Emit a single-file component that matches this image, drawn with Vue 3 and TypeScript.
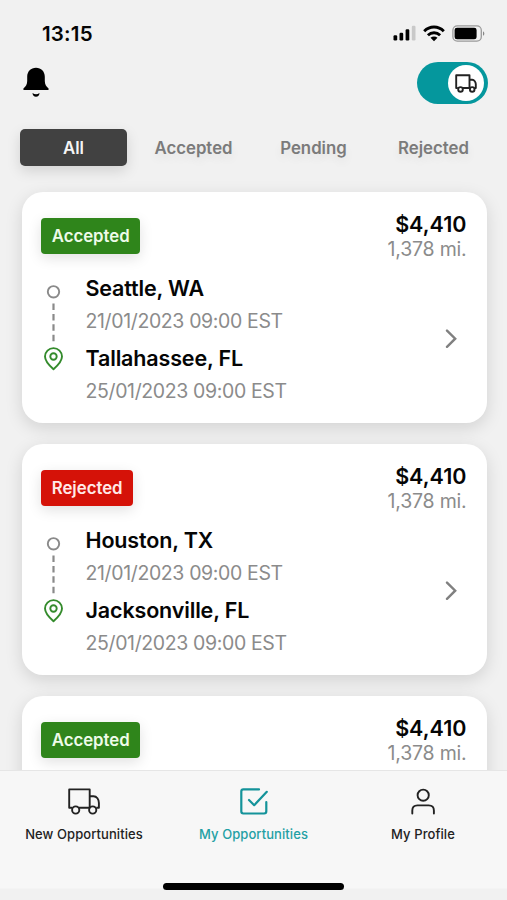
<script setup lang="ts">
import { ref } from 'vue'

type Status = 'Accepted' | 'Rejected'

interface Stop {
  city: string
  date: string
}

interface Load {
  id: number
  status: Status
  price: string
  distance: string
  stops: Stop[]
}

const tabs = ['All', 'Accepted', 'Pending', 'Rejected']
const activeTab = ref('All')

const loads: Load[] = [
  {
    id: 1,
    status: 'Accepted',
    price: '$4,410',
    distance: '1,378 mi.',
    stops: [
      { city: 'Seattle, WA', date: '21/01/2023 09:00 EST' },
      { city: 'Tallahassee, FL', date: '25/01/2023 09:00 EST' },
    ],
  },
  {
    id: 2,
    status: 'Rejected',
    price: '$4,410',
    distance: '1,378 mi.',
    stops: [
      { city: 'Houston, TX', date: '21/01/2023 09:00 EST' },
      { city: 'Jacksonville, FL', date: '25/01/2023 09:00 EST' },
    ],
  },
  { id: 3, status: 'Accepted', price: '$4,410', distance: '1,378 mi.', stops: [] },
]
</script>

<template>
  <div class="screen">
    <div class="status-bar">
      <span class="clock">13:15</span>
      <div class="indicators">
        <svg width="23" height="16" viewBox="0 0 23 16">
          <rect x="0.5" y="10.300" width="3.700" height="5.100" rx="1.200" />
          <rect x="6.500" y="7.700" width="3.700" height="7.700" rx="1.200" />
          <rect x="12.600" y="4.200" width="3.700" height="11.200" rx="1.200" />
          <rect x="18.800" y="0.800" width="3.700" height="14.600" rx="1.200" fill="#c9c9c9" />
        </svg>
        <svg width="22" height="17" viewBox="0 0 22 17">
          <g fill="none" stroke="#000" stroke-width="2.900">
            <path d="M1.200 6.200C6.800.6 15.200.6 20.800 6.200" />
            <path d="M4.900 10.200C8.400 6.900 13.600 6.900 17.100 10.200" />
          </g>
          <path d="M7.500 12.700C9.500 11.100 12.500 11.100 14.500 12.700L11 16.200Z" />
        </svg>
        <svg width="33" height="17" viewBox="0 0 33 17">
          <rect x="0.900" y="0.900" width="28.400" height="15.200" rx="4.400" fill="none" stroke="#999" stroke-width="1.300" />
          <rect x="2.600" y="2.700" width="22" height="11.600" rx="2.400" />
          <path d="M31 6.200C32.800 7 32.800 10 31 10.800Z" fill="#888" />
        </svg>
      </div>
    </div>

    <header class="header">
      <svg class="bell" width="28" height="31" viewBox="0 0 28 31">
        <path d="M14 .8C8.800.8 5.200 4.600 5.200 9.800V14C5.200 17.300 3.800 19.400 1.700 21.300C1 22 1.200 23 2 23H26C26.800 23 27 22 26.300 21.300C24.200 19.400 22.800 17.300 22.800 14V9.800C22.800 4.600 19.200.8 14 .8Z" />
        <path d="M10.500 26Q12.200 27.200 14 27.200Q15.800 27.200 17.500 26C17.500 28.300 16 29.700 14 29.700S10.500 28.300 10.500 26Z" />
      </svg>
      <div class="toggle" role="switch" aria-checked="true">
        <div class="knob">
          <svg width="22" height="19" viewBox="0 0 22 19" fill="none" stroke="#222" stroke-width="1.900" stroke-linejoin="round">
            <path d="M2.800 14H1.200V1.200H14.500V14H8M14.500 5.800H17.200C19.300 5.800 20.800 8.200 20.800 10.200V14H19.800" />
            <circle cx="5.500" cy="15.400" r="2.300" />
            <circle cx="17.200" cy="15.400" r="2.300" />
          </svg>
        </div>
      </div>
    </header>

    <nav class="tabs">
      <button v-for="tab in tabs" :key="tab" class="tab" :class="{ active: tab === activeTab }" @click="activeTab = tab">{{ tab }}</button>
    </nav>

    <main class="list">
      <article v-for="load in loads" :key="load.id" class="card">
        <div class="card-top">
          <span class="badge" :class="load.status.toLowerCase()">{{ load.status }}</span>
          <div class="rate">
            <div class="price">{{ load.price }}</div>
            <div class="distance">{{ load.distance }}</div>
          </div>
        </div>
        <div v-if="load.stops.length" class="card-body">
          <svg class="route" width="20" height="88" viewBox="0 0 20 88" fill="none">
            <circle cx="9.500" cy="7.800" r="5.700" stroke="#8a8a8a" stroke-width="1.900" />
            <path d="M9.500 19.500V58" stroke="#8a8a8a" stroke-width="2.200" stroke-dasharray="6.500 3.900" />
            <path d="M9.500 85.300C4.800 81.200 1 77.600 1 72.600A8.500 8.500 0 0 1 18 72.600C18 77.600 14.200 81.200 9.500 85.300Z" stroke="#348b2c" stroke-width="1.900" stroke-linejoin="round" />
            <circle cx="9.500" cy="72.500" r="3.200" stroke="#348b2c" stroke-width="1.900" />
          </svg>
          <div class="stops">
            <div v-for="stop in load.stops" :key="stop.city" class="stop">
              <div class="city">{{ stop.city }}</div>
              <div class="date">{{ stop.date }}</div>
            </div>
          </div>
          <svg class="chevron" width="12" height="20" viewBox="0 0 12 20" fill="none" stroke="#808080" stroke-width="2.400" stroke-linecap="round">
            <path d="M2 1.600L10.200 9.700L2 17.800" />
          </svg>
        </div>
      </article>
    </main>

    <footer class="tab-bar">
      <div class="items">
        <div class="item">
          <svg width="32" height="27" viewBox="0 0 32 27" fill="none" stroke="#222" stroke-width="1.900" stroke-linejoin="round">
            <path d="M4.200 19.700H1.200V1.400H21.700V19.700H11M21.700 8.200H25.500C28.800 8.200 30.900 11.500 30.900 15V19.700H28.300" />
            <circle cx="7.700" cy="22" r="3.600" />
            <circle cx="24.700" cy="22" r="3.600" />
          </svg>
          <span>New Opportunities</span>
        </div>
        <div class="item selected">
          <svg width="29" height="27" viewBox="0 0 29 27" fill="none" stroke="#14939a" stroke-width="2.200" stroke-linecap="round" stroke-linejoin="round">
            <path d="M20 1.400H4.300Q2.300 1.400 2.300 3.400V23.300Q2.300 25.500 4.300 25.500H25.200Q27.300 25.500 27.300 23.300V14" />
            <path d="M10 12L15.200 17.200L27.800 3.800" />
          </svg>
          <span>My Opportunities</span>
        </div>
        <div class="item">
          <svg width="24" height="27" viewBox="0 0 24 27" fill="none" stroke="#222" stroke-width="1.900" stroke-linecap="round">
            <circle cx="12.200" cy="7.200" r="5.600" />
            <path d="M1.300 25.500V22.500Q1.300 17.400 6.500 17.400H17.700Q22.900 17.400 22.900 22.500V25.500" />
          </svg>
          <span>My Profile</span>
        </div>
      </div>
      <div class="home-indicator"></div>
    </footer>
  </div>
</template>

<style>
body {
  margin: 0;
  overflow: hidden;
}
</style>

<style scoped>
.screen {
  display: flex;
  flex-direction: column;
  width: 507px;
  height: 900px;
  overflow: hidden;
  background: #f1f1f1;
  font-family: Inter, "Liberation Sans", sans-serif;
  color: #050505;
}
.status-bar {
  display: flex;
  flex: none;
  justify-content: space-between;
  align-items: center;
  height: 61px;
  padding: 5px 22px 0 42px;
  box-sizing: border-box;
}
.clock {
  padding-top: 1px;
  font-size: 20.500px;
  font-weight: 600;
  letter-spacing: 0.2px;
  line-height: 24px;
}
.indicators {
  display: flex;
  align-items: center;
  gap: 7px;
}
.header {
  display: flex;
  flex: none;
  justify-content: space-between;
  align-items: center;
  height: 43px;
  padding: 0 19.500px 0 22px;
}
.toggle {
  display: flex;
  justify-content: flex-end;
  align-items: center;
  width: 71px;
  height: 42px;
  padding-right: 3.500px;
  box-sizing: border-box;
  border-radius: 21px;
  background: #05979d;
}
.knob {
  display: flex;
  align-items: center;
  justify-content: center;
  width: 36px;
  height: 36px;
  border-radius: 50%;
  background: #fff;
}
.knob svg {
  margin-top: 1px;
}
.tabs {
  display: grid;
  flex: none;
  grid-template-columns: repeat(4, 107px);
  gap: 13px;
  padding: 25px 20px 0;
}
.tab {
  height: 37px;
  padding: 1px 0 0;
  border: 0;
  border-radius: 5px;
  background: none;
  color: #7b7b7b;
  font: 600 16.800px/36px Inter, "Liberation Sans", sans-serif;
  text-shadow: 0 5px 10px rgba(0, 0, 0, 0.07);
}
.tab.active {
  background: #414141;
  color: #f5f5f5;
  box-shadow: 0 5px 14px rgba(0, 0, 0, 0.13);
  text-shadow: none;
}
.list {
  display: flex;
  flex: 1;
  flex-direction: column;
  gap: 21px;
  min-height: 0;
  overflow: hidden;
  padding: 26px 20.500px 0 21.500px;
}
.card {
  flex: none;
  height: 231px;
  padding: 19px 20px 0 19.500px;
  box-sizing: border-box;
  border-radius: 21px;
  background: #fff;
  box-shadow: 0 5px 17px rgba(0, 0, 0, 0.13);
}
.card-top {
  display: flex;
  justify-content: space-between;
  height: 61px;
}
.badge {
  height: 36px;
  margin-top: 7px;
  padding: 0 10.700px;
  border-radius: 4px;
  color: #eefbe9;
  font-size: 16.800px;
  font-weight: 600;
  line-height: 36px;
  box-shadow: 0 4px 14px rgba(0, 0, 0, 0.12);
}
.badge.accepted {
  background: #2f851b;
}
.badge.rejected {
  background: #d51208;
  color: #ffe9e7;
}
.rate {
  text-align: right;
}
.price {
  font-size: 21.500px;
  font-weight: 600;
  line-height: 26px;
}
.distance {
  color: #8b8b8b;
  font-size: 19.500px;
  letter-spacing: -0.2px;
  line-height: 24px;
}
.card-body {
  display: flex;
}
.route {
  margin: 12px 0 0 2.500px;
}
.stops {
  display: flex;
  flex: 1;
  flex-direction: column;
  gap: 6px;
  margin-left: 22px;
}
.city {
  font-size: 21.500px;
  font-weight: 600;
  letter-spacing: -0.15px;
  line-height: 32px;
}
.date {
  color: #8b8b8b;
  font-size: 19.500px;
  letter-spacing: -0.370px;
  line-height: 32px;
  padding-top: 1px;
  margin-bottom: -1px;
}
.chevron {
  margin: 57px 9.500px 0 0;
}
.tab-bar {
  display: flex;
  flex: none;
  flex-direction: column;
  justify-content: space-between;
  align-items: center;
  height: 130px;
  padding-bottom: 10px;
  box-sizing: border-box;
  border-top: 1px solid #e6e6e6;
  background: linear-gradient(#f7f7f7 117px, #f1f1f1 118px);
}
.items {
  display: grid;
  grid-template-columns: repeat(3, 169.500px);
  padding-top: 17px;
}
.item {
  display: flex;
  flex-direction: column;
  align-items: center;
  gap: 11px;
  color: #222;
  font-size: 13px;
  font-weight: 450;
  letter-spacing: 0.08px;
  line-height: 16px;
}
.item.selected {
  color: #23a0a4;
}
.home-indicator {
  width: 181px;
  height: 7px;
  border-radius: 4px;
  background: #000;
}
</style>
